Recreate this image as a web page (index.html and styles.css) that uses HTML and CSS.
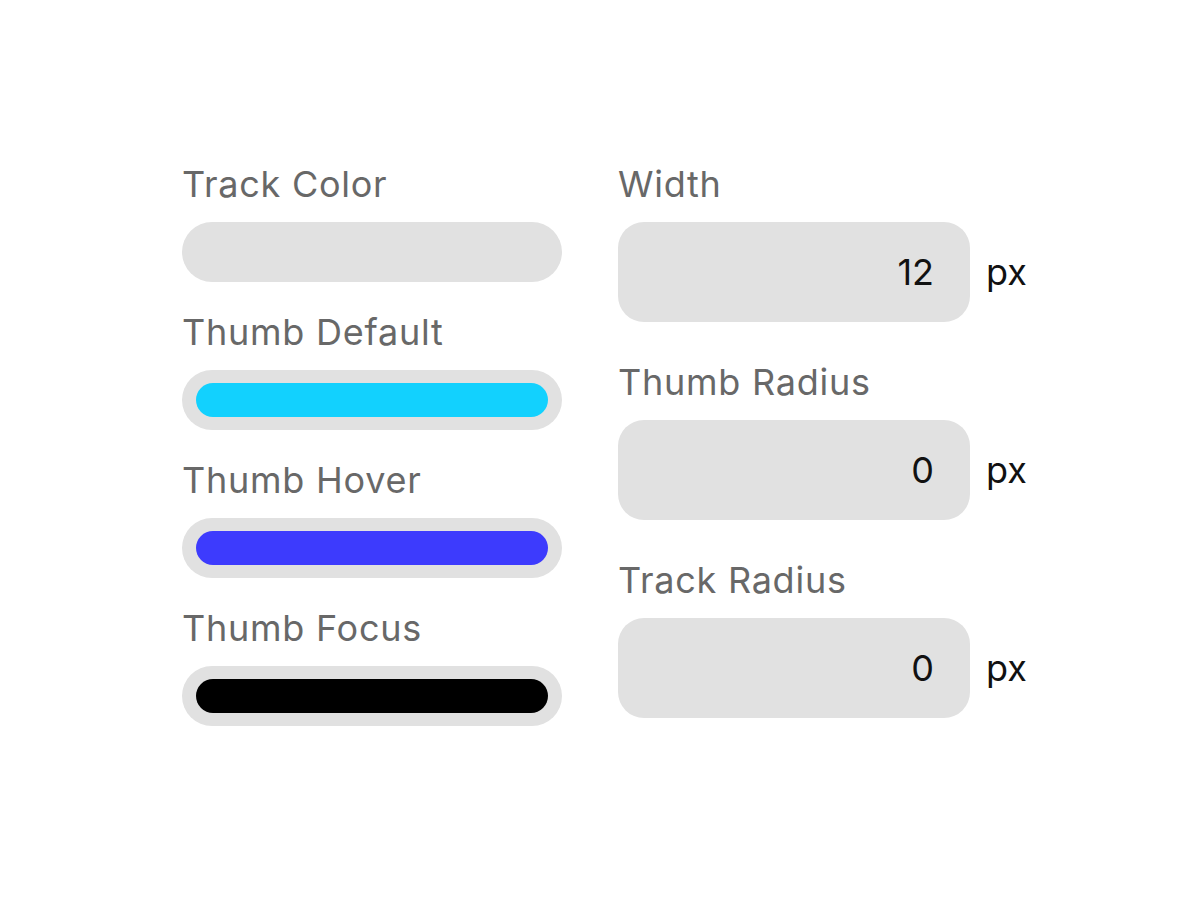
FILE: index.html
```html
<!DOCTYPE html>
<html lang="en">
<head>
<meta charset="utf-8">
<title>Scrollbar settings</title>
<link rel="stylesheet" href="styles.css">
</head>
<body>
<main class="panel">
  <section class="col col-colors">
    <div class="field">
      <div class="label">Track Color</div>
      <div class="swatch"></div>
    </div>
    <div class="field">
      <div class="label">Thumb Default</div>
      <div class="swatch"><div class="thumb thumb-default"></div></div>
    </div>
    <div class="field">
      <div class="label">Thumb Hover</div>
      <div class="swatch"><div class="thumb thumb-hover"></div></div>
    </div>
    <div class="field">
      <div class="label">Thumb Focus</div>
      <div class="swatch"><div class="thumb thumb-focus"></div></div>
    </div>
  </section>
  <section class="col col-sizes">
    <div class="field field-num">
      <div class="label">Width</div>
      <div class="num-row">
        <div class="num-box">12</div>
        <span class="unit">px</span>
      </div>
    </div>
    <div class="field field-num">
      <div class="label">Thumb Radius</div>
      <div class="num-row">
        <div class="num-box">0</div>
        <span class="unit">px</span>
      </div>
    </div>
    <div class="field field-num">
      <div class="label">Track Radius</div>
      <div class="num-row">
        <div class="num-box">0</div>
        <span class="unit">px</span>
      </div>
    </div>
  </section>
</main>
</body>
</html>
```
FILE: styles.css
```css
html, body {
  margin: 0;
  padding: 0;
  background: #ffffff;
}

body {
  width: 1200px;
  height: 900px;
  font-family: Inter, "Noto Sans", "Liberation Sans", sans-serif;
}

.panel {
  display: flex;
  gap: 56px;
  padding: 163px 0 0 182px;
}

.col {
  display: flex;
  flex-direction: column;
}

.col-colors {
  width: 380px;
  gap: 29px;
}

.col-sizes {
  gap: 39px;
}

.field {
  display: flex;
  flex-direction: column;
  gap: 16px;
}

.label {
  font-size: 36px;
  line-height: 43px;
  letter-spacing: 0.75px;
  color: #686868;
  white-space: nowrap;
}

.swatch {
  height: 60px;
  box-sizing: border-box;
  padding: 13px 14px;
  background: #e1e1e1;
  border-radius: 30px;
}

.thumb {
  height: 34px;
  border-radius: 17px;
}

.thumb-default { background: #12d1fe; }
.thumb-hover { background: #3d3bfd; }
.thumb-focus { background: #000000; }

.num-row {
  display: flex;
  align-items: center;
  gap: 16px;
}

.num-box {
  width: 352px;
  height: 100px;
  box-sizing: border-box;
  background: #e1e1e1;
  border-radius: 26px;
  display: flex;
  align-items: center;
  justify-content: flex-end;
  padding-right: 36px;
  font-size: 36px;
  color: #111111;
}

.unit {
  font-size: 36px;
  color: #111111;
}
```
